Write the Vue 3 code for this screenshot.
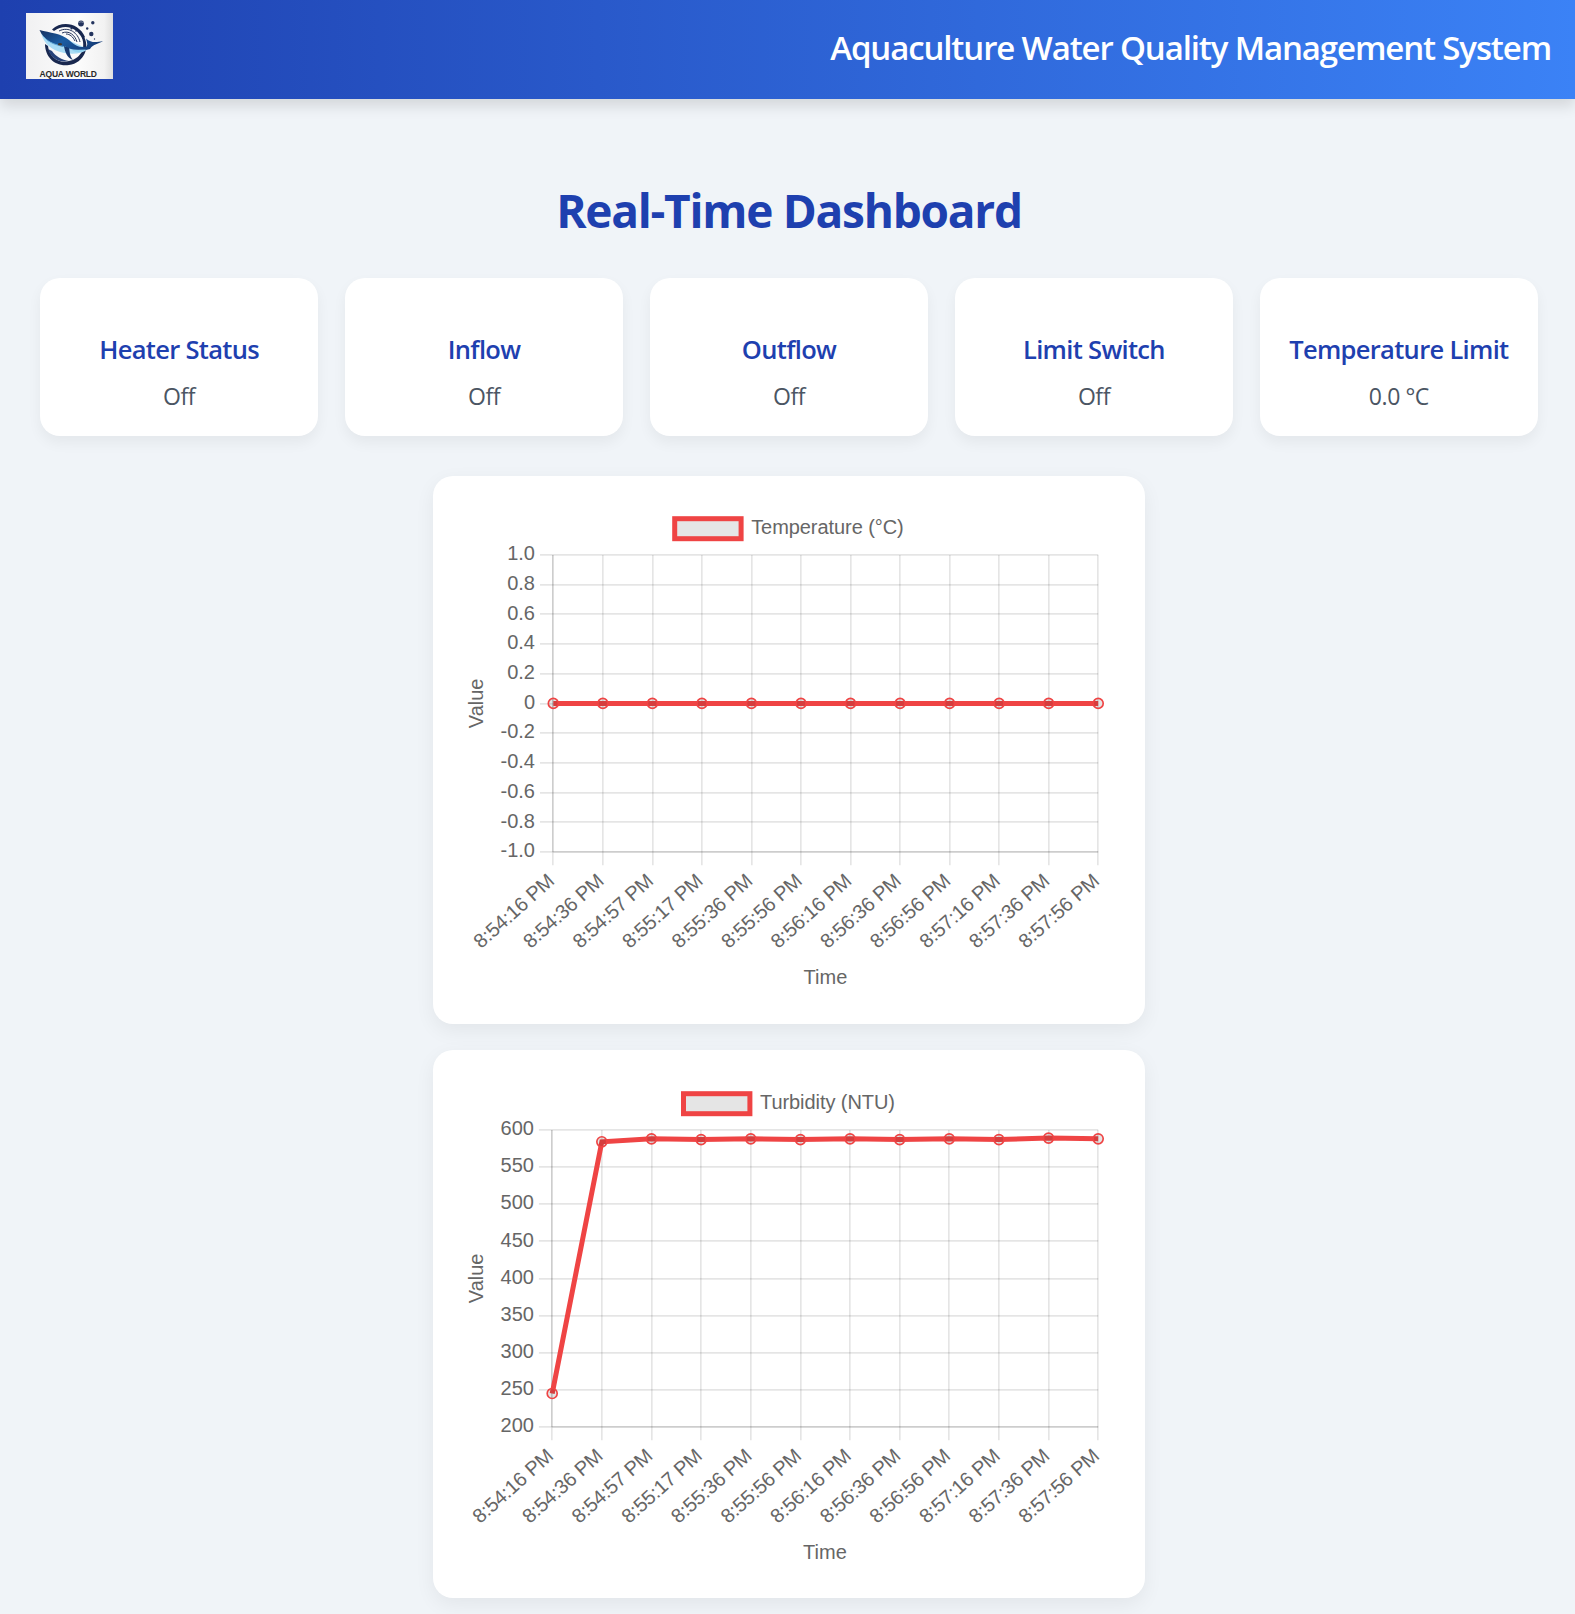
<script setup>
const statuses = [
  { title: 'Heater Status', value: 'Off' },
  { title: 'Inflow', value: 'Off' },
  { title: 'Outflow', value: 'Off' },
  { title: 'Limit Switch', value: 'Off' },
  { title: 'Temperature Limit', value: '0.0 °C' }
]

const times = [
  '8:54:16 PM', '8:54:36 PM', '8:54:57 PM', '8:55:17 PM', '8:55:36 PM', '8:55:56 PM',
  '8:56:16 PM', '8:56:36 PM', '8:56:56 PM', '8:57:16 PM', '8:57:36 PM', '8:57:56 PM'
]

// Align a grid line's centre so that its leading edge sits on a whole pixel.
const snap = (v) => Math.round(v - 0.833) + 0.833

function buildChart({ label, ticks, values, left, top, legendX }) {
  const right = 665.2
  const height = 297
  const max = Number(ticks[0])
  const min = Number(ticks[ticks.length - 1])
  const points = values.map((v, i) => ({
    x: left + (i * (right - left)) / (values.length - 1),
    y: top + ((max - v) / (max - min)) * height
  }))
  return {
    label, left, top, right, legendX,
    bottom: top + height,
    points,
    line: points.map((p) => `${p.x},${p.y}`).join(' '),
    rows: ticks.map((text, i) => ({ text, y: top + (i * height) / (ticks.length - 1) })),
    cols: points.map((p, i) => ({ text: times[i], x: p.x }))
  }
}

const charts = [
  buildChart({
    label: 'Temperature (°C)',
    ticks: ['1.0', '0.8', '0.6', '0.4', '0.2', '0', '-0.2', '-0.4', '-0.6', '-0.8', '-1.0'],
    values: Array(12).fill(0),
    left: 120.3, top: 78.9, legendX: 239.2
  }),
  buildChart({
    label: 'Turbidity (NTU)',
    ticks: ['600', '550', '500', '450', '400', '350', '300', '250', '200'],
    values: [245, 584, 588, 587, 588, 587, 588, 587, 588, 587, 589, 588],
    left: 119.2, top: 79.9, legendX: 248
  })
]
</script>

<template>
  <div class="page">
    <header class="topbar">
      <svg class="logo" viewBox="0 0 87 66" role="img" aria-label="Aqua World">
        <defs>
          <linearGradient id="paper" x1="0" x2="1" y1="0" y2="0">
            <stop offset="0" stop-color="#f1f1f2" />
            <stop offset="0.6" stop-color="#fcfcfc" />
            <stop offset="0.9" stop-color="#f2f2f2" />
            <stop offset="1" stop-color="#dfdfdf" />
          </linearGradient>
          <linearGradient id="whale" x1="0" x2="1" y1="0" y2="0.5">
            <stop offset="0" stop-color="#14305f" />
            <stop offset="0.5" stop-color="#1b5da3" />
            <stop offset="1" stop-color="#163f7b" />
          </linearGradient>
        </defs>
        <rect width="87" height="66" fill="url(#paper)" />
        <path d="M26 16.500C36 7 53 10 59 24L56.500 26C50 13 38 11 28 18Z" fill="#19284f" />
        <path d="M57 22C65 34 58 50 43 52C29 54 19 44 19 31L22 33C23 44 33 51 43 48C54 46 60 36 56 25Z" fill="#19284f" />
        <path d="M22 36C25 46 34 50 43 48C36 47 29 43 26 38Z" fill="#274279" />
        <path d="M33 18C43 13 52 20 54 29M36 20C43 17 49 22 51 29M40 21C44 21 47 24 49 28" fill="none" stroke="#26345a" stroke-width="1" />
        <path d="M15 20C18 31 25 37 38 40C49 42 57 40 62 36L42 27Z" fill="#a9dcf5" />
        <path d="M13.500 17C24 20 35 20 43 27C50 34 56 35 60.500 33.500C62 32 61 29 60 25.500C65 30 70 29.500 77 28C73 31 67 31 64 36C57 38 50 37 45 36L34 33C25 30 18 27 13.500 17Z" fill="url(#whale)" />
        <path d="M18 24C23 30 30 32 40 34" fill="none" stroke="#63abd9" stroke-width="1" />
        <path d="M38 33C39 39 41 45 47 47C43 42 44 38 43 35Z" fill="#17386f" />
        <path d="M46 37L60 36.500C56 40 50 40 46 37Z" fill="#8fd2f1" />
        <ellipse cx="34" cy="31.200" rx="2" ry="1.300" fill="#44392f" />
        <circle cx="55" cy="10.500" r="2.900" fill="#23345e" />
        <path d="M52.500 9.500Q55 8 57.500 9.500" fill="none" stroke="#a4abba" stroke-width="0.700" />
        <circle cx="66.800" cy="9.700" r="1.700" fill="#23345e" />
        <circle cx="61.200" cy="15.500" r="1.200" fill="#23345e" />
        <circle cx="65.300" cy="21" r="2.200" fill="#23345e" />
        <circle cx="45.500" cy="15.500" r="1.100" fill="#23345e" />
        <circle cx="50" cy="18" r="0.800" fill="#23345e" />
        <circle cx="68.500" cy="26" r="0.700" fill="#23345e" />
        <text class="logo-text" x="13.500" y="64" textLength="57.500" lengthAdjust="spacing">AQUA WORLD</text>
      </svg>
      <h1 class="brand">Aquaculture Water Quality Management System</h1>
    </header>

    <main class="content">
      <h2 class="heading">Real-Time Dashboard</h2>

      <section class="statuses">
        <article v-for="s in statuses" :key="s.title" class="status">
          <h3 class="status-title">{{ s.title }}</h3>
          <p class="status-value">{{ s.value }}</p>
        </article>
      </section>

      <section class="charts">
        <article v-for="c in charts" :key="c.label" class="chart-card">
          <svg class="chart" viewBox="0 0 712 548">
            <rect class="legend-box" :x="c.legendX + 2.5" :y="c.top - 36.2" width="66.4" height="20" />
            <text class="label legend" :x="c.legendX + 79" :y="c.top - 20.600">{{ c.label }}</text>

            <g class="grid">
              <line v-for="r in c.rows" :key="r.text" :x1="c.left - 13.300" :x2="c.right" :y1="snap(r.y)" :y2="snap(r.y)" />
              <line v-for="t in c.cols" :key="t.text" :x1="snap(t.x)" :x2="snap(t.x)" :y1="c.top" :y2="c.bottom + 13.300" />
              <line :x1="snap(c.left)" :x2="snap(c.left)" :y1="c.top" :y2="c.bottom" />
              <line :x1="c.left" :x2="c.right" :y1="snap(c.bottom)" :y2="snap(c.bottom)" />
            </g>

            <text v-for="r in c.rows" :key="r.text" class="label end" :x="c.left - 18.300" :y="r.y + 5.300">{{ r.text }}</text>
            <text
              v-for="t in c.cols" :key="t.text" class="label end time"
              :transform="`translate(${t.x + 2.2} ${c.bottom + 30.8}) rotate(-41.8)`"
            >{{ t.text }}</text>
            <text class="label middle" :transform="`translate(49.6 ${c.top + 148.5}) rotate(-90)`">Value</text>
            <text class="label middle" :x="(c.left + c.right) / 2 - 0.3" :y="c.bottom + 132">Time</text>

            <polyline class="series" :points="c.line" />
            <circle v-for="p in c.points" :key="p.x" class="point" :cx="p.x" :cy="p.y" r="5" />
          </svg>
        </article>
      </section>
    </main>
  </div>
</template>

<style>
body {
  margin: 0;
  background: #f0f4f8;
}
</style>

<style scoped>
.page {
  min-height: 1614px;
  box-sizing: border-box;
  background: #f0f4f8;
  font-family: "Segoe UI", "Open Sans", "Noto Sans", sans-serif;
}

.topbar {
  position: relative;
  box-sizing: border-box;
  height: 99px;
  padding: 13px 24px 20px 26px;
  display: flex;
  align-items: flex-start;
  justify-content: space-between;
  background: linear-gradient(90deg, #1e40af, #3b82f6);
  box-shadow: 0 6.67px 13.33px rgba(0, 0, 0, 0.12);
}

.logo {
  display: block;
  width: 87px;
  height: 66px;
}

.logo-text {
  font: 700 8.5px "Liberation Sans", Arial, sans-serif;
  fill: #292929;
}

.brand {
  margin: 12.5px 0 0;
  font-size: 33px;
  line-height: 44px;
  font-weight: 600;
  letter-spacing: -1.13px;
  white-space: nowrap;
  color: #fff;
}

.content {
  padding: 81px 37px 16px 40px;
}

.heading {
  margin: 0;
  font-size: 46px;
  line-height: 60px;
  font-weight: 700;
  letter-spacing: -1.25px;
  text-align: center;
  color: #1e40af;
}

.statuses {
  margin-top: 38px;
  display: grid;
  grid-template-columns: repeat(5, 1fr);
  gap: 26.67px;
}

.status {
  box-sizing: border-box;
  height: 158px;
  padding-top: 53px;
  border-radius: 20px;
  background: #fff;
  box-shadow: 0 6.67px 13.33px rgba(0, 0, 0, 0.05);
  text-align: center;
}

.status-title {
  margin: 0;
  font-size: 25.5px;
  line-height: 36px;
  font-weight: 600;
  letter-spacing: -0.68px;
  white-space: nowrap;
  color: #1e40af;
}

.status-value {
  margin: 13px 0 0;
  font-size: 23px;
  line-height: 32px;
  letter-spacing: -0.45px;
  color: #4b5563;
}

.charts {
  margin-top: 40px;
  display: flex;
  flex-direction: column;
  align-items: center;
  gap: 26px;
}

.chart-card {
  width: 712px;
  height: 548px;
  border-radius: 20px;
  background: #fff;
  box-shadow: 0 6.67px 20px rgba(0, 0, 0, 0.06);
}

.chart {
  display: block;
  width: 712px;
  height: 548px;
}

.label {
  font: 20px "Liberation Sans", Arial, sans-serif;
  fill: #666;
}

.legend {
  letter-spacing: -0.07px;
}

.time {
  letter-spacing: -0.25px;
}

.end {
  text-anchor: end;
}

.middle {
  text-anchor: middle;
}

.grid line {
  stroke: rgba(0, 0, 0, 0.1);
  stroke-width: 1.667px;
}

.legend-box {
  fill: rgba(0, 0, 0, 0.1);
  stroke: #ef4444;
  stroke-width: 5px;
}

.series {
  fill: none;
  stroke: #ef4444;
  stroke-width: 5px;
}

.point {
  fill: rgba(0, 0, 0, 0.1);
  stroke: #ef4444;
  stroke-width: 1.667px;
}
</style>
